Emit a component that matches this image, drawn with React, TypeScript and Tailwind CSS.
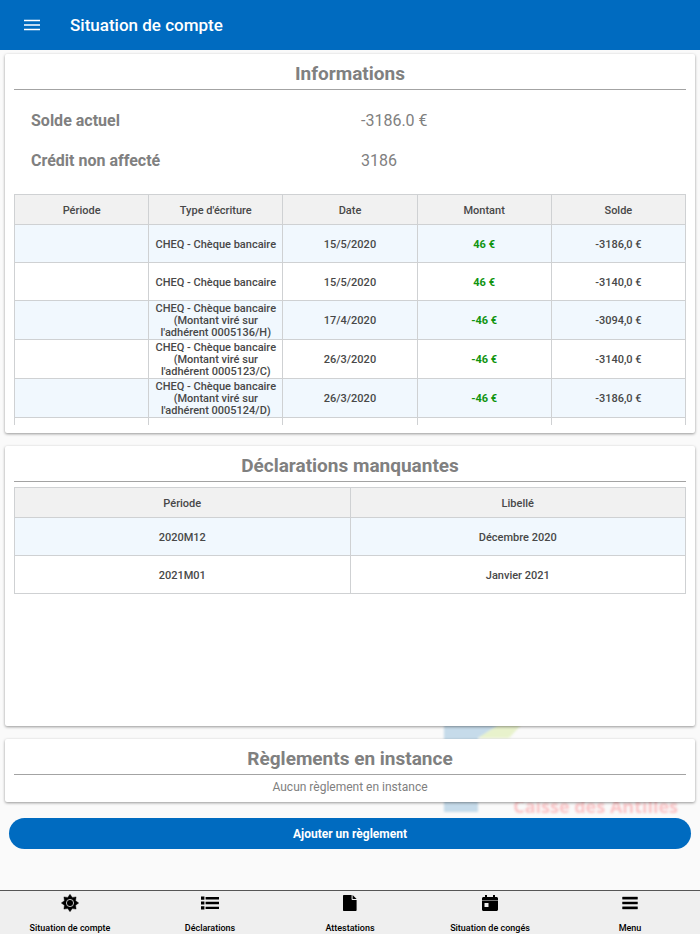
import { type ReactNode } from "react";

type Column = string;

const ecritureColumns: Column[] = ["Période", "Type d'écriture", "Date", "Montant", "Solde"];

const ecritures = [
  { type: ["CHEQ - Chèque bancaire"], date: "15/5/2020", montant: "46 €", solde: "-3186,0 €" },
  { type: ["CHEQ - Chèque bancaire"], date: "15/5/2020", montant: "46 €", solde: "-3140,0 €" },
  { type: ["CHEQ - Chèque bancaire", "(Montant viré sur", "l'adhérent 0005136/H)"], date: "17/4/2020", montant: "-46 €", solde: "-3094,0 €" },
  { type: ["CHEQ - Chèque bancaire", "(Montant viré sur", "l'adhérent 0005123/C)"], date: "26/3/2020", montant: "-46 €", solde: "-3140,0 €" },
  { type: ["CHEQ - Chèque bancaire", "(Montant viré sur", "l'adhérent 0005124/D)"], date: "26/3/2020", montant: "-46 €", solde: "-3186,0 €" },
];

const declarations = [
  { periode: "2020M12", libelle: "Décembre 2020" },
  { periode: "2021M01", libelle: "Janvier 2021" },
];

const cell = "border border-[#cfd1d3] px-0 pt-0.5 pb-0 text-center align-middle";

function Card({ title, className, children }: { title: string; className: string; children: ReactNode }) {
  return (
    <section className={`relative z-10 rounded-xs bg-white px-[9px] shadow-[0_1px_3px_rgba(0,0,0,0.4)] ${className}`}>
      <h2 className="border-b border-[#a3a3a3] pt-2 pb-[3px] text-center text-[19px] leading-6 font-bold text-[#808080]">{title}</h2>
      {children}
    </section>
  );
}

function HeadRow({ columns }: { columns: Column[] }) {
  return (
    <thead>
      <tr className="h-[30px] bg-[#f1f1f1]">
        {columns.map((c) => (
          <th key={c} scope="col" className={`${cell} font-medium`}>
            {c}
          </th>
        ))}
      </tr>
    </thead>
  );
}

function SunIcon() {
  return (
    <svg viewBox="0 0 18 18" className="size-[18px]" aria-hidden="true">
      <path
        d="M9 .3L11.3 3.4L15.1 2.9L14.6 6.7L17.7 9L14.6 11.3L15.1 15.1L11.3 14.6L9 17.7L6.7 14.6L2.9 15.1L3.4 11.3L.3 9L3.4 6.7L2.9 2.9L6.7 3.4Z"
        stroke="#000"
        strokeWidth=".4"
        strokeLinejoin="round"
      />
      <circle cx="9" cy="9" r="3.6" fill="none" stroke="#efefef" strokeWidth="0.8" />
    </svg>
  );
}

function ListIcon() {
  return (
    <svg viewBox="0 0 18 14" className="h-3.5 w-[18px]" aria-hidden="true">
      <path d="M0 .5h3.4v3.2H0zM0 5.4h3.4v3.2H0zM0 10.3h3.4v3.2H0zM4.6 1H18v2.4H4.6zM4.6 5.8H18v2.4H4.6zM4.6 10.7H18v2.4H4.6z" />
    </svg>
  );
}

function FileIcon() {
  return (
    <svg viewBox="0 0 14 16" className="h-4 w-3.5" aria-hidden="true">
      <path d="M1 0h7.6v4.2c0 .5.4.8.8.8h4.200v10c0 .6-.4 1-1 1H1c-.6 0-1-.4-1-1V1c0-.6.4-1 1-1zM9.6 0l4 4h-4z" />
    </svg>
  );
}

function CalendarIcon() {
  return (
    <svg viewBox="0 0 16 16" className="size-4" aria-hidden="true">
      <path
        fillRule="evenodd"
        d="M3 0h2v2h6V0h2v2h1.5c.8 0 1.5.7 1.5 1.5V5H0V3.5C0 2.7.7 2 1.5 2H3zM0 5.5h16v9c0 .8-.7 1.5-1.5 1.5h-13C.7 16 0 15.3 0 14.5zM2.5 8v4h4V8z"
      />
    </svg>
  );
}

function BarsIcon() {
  return (
    <svg viewBox="0 0 16 14" className="h-3.5 w-4" aria-hidden="true">
      <path d="M.5 1h15v2.2H.5zM.5 5.900h15v2.2H.5zM.5 10.800h15V13H.5z" stroke="#000" strokeWidth=".4" strokeLinejoin="round" />
    </svg>
  );
}

const tabs = [
  { label: "Situation de compte", icon: <SunIcon /> },
  { label: "Déclarations", icon: <ListIcon /> },
  { label: "Attestations", icon: <FileIcon /> },
  { label: "Situation de congés", icon: <CalendarIcon /> },
  { label: "Menu", icon: <BarsIcon /> },
];

function Watermark() {
  return (
    <div className="absolute top-[660px] right-[22px] h-[106px] w-[234px]" aria-hidden="true">
      <svg viewBox="0 0 234 106" className="absolute inset-0 size-full blur-[1px]">
        <path d="M0 0H78L34 28V102H0z" fill="#c6dbea" />
        <path d="M34 28L78 0h13L65 28z" fill="#e8f2cc" />
      </svg>
      <p className="absolute right-0 bottom-0 text-lg leading-5 font-bold whitespace-nowrap text-[#fac4c6] blur-[1px] [font-family:'Open_Sans',sans-serif]">
        Caisse des Antilles
      </p>
    </div>
  );
}

export default function App() {
  return (
    <div className="flex min-h-screen flex-col bg-[#fafafa] [font-family:Roboto,sans-serif]">
      <header className="flex h-[50px] items-center gap-[30px] bg-[#006bc0] px-6 text-white">
        <button type="button" aria-label="Ouvrir le menu" className="flex size-4 items-center">
          <svg viewBox="0 0 16 12" className="h-3 w-4" aria-hidden="true">
            <path d="M0 1.5h16M0 6h16M0 10.5h16" stroke="currentColor" strokeWidth="1.5" />
          </svg>
        </button>
        <h1 className="text-[17px] leading-6 font-medium">Situation de compte</h1>
      </header>

      <main className="relative flex flex-1 flex-col px-[5px] pt-1">
        <Watermark />

        <Card title="Informations" className="pb-2">
          <dl className="grid grid-cols-[330px_1fr] gap-y-4 px-[17px] pt-[19px] pb-[21px] text-base leading-6 text-[#808080]">
            <dt className="font-bold">Solde actuel</dt>
            <dd>-3186.0 €</dd>
            <dt className="font-bold">Crédit non affecté</dt>
            <dd>3186</dd>
          </dl>
          <div className="h-[231px] overflow-hidden">
            <table className="w-full table-fixed border-collapse text-[11px] leading-3 font-medium text-[#484848]">
              <HeadRow columns={ecritureColumns} />
              <tbody>
                {ecritures.map((e, i) => (
                  <tr key={i} className={`${e.type.length > 1 ? "h-[39px]" : "h-[38px]"} ${i % 2 === 0 ? "bg-[#f1f8fe]" : "bg-white"}`}>
                    <td className={cell} />
                    <td className={cell}>
                      {e.type.map((line) => (
                        <span key={line} className="block whitespace-nowrap">
                          {line}
                        </span>
                      ))}
                    </td>
                    <td className={cell}>{e.date}</td>
                    <td className={`${cell} font-bold text-[#109410]`}>{e.montant}</td>
                    <td className={cell}>{e.solde}</td>
                  </tr>
                ))}
                <tr className="h-[39px] bg-white">
                  {ecritureColumns.map((c) => (
                    <td key={c} className={cell} />
                  ))}
                </tr>
              </tbody>
            </table>
          </div>
        </Card>

        <Card title="Déclarations manquantes" className="mt-[13px] min-h-[280px]">
          <table className="mt-[5px] w-full table-fixed border-collapse text-[11px] leading-3 font-medium text-[#484848]">
            <HeadRow columns={["Période", "Libellé"]} />
            <tbody>
              {declarations.map((d, i) => (
                <tr key={d.periode} className={`h-[38px] ${i % 2 === 0 ? "bg-[#f1f8fe]" : "bg-white"}`}>
                  <td className={cell}>{d.periode}</td>
                  <td className={cell}>{d.libelle}</td>
                </tr>
              ))}
            </tbody>
          </table>
        </Card>

        <Card title="Règlements en instance" className="mt-[13px] pb-[7px]">
          <p className="pt-1 text-center text-xs leading-4 text-[#808080]">Aucun règlement en instance</p>
        </Card>

        <button type="button" className="relative z-10 mx-1 mt-4 h-[31px] rounded-full bg-[#006bc0] text-xs font-bold text-white">
          Ajouter un règlement
        </button>
      </main>

      <nav className="grid h-11 grid-cols-5 border-t border-[#555] bg-[#efefef]">
        {tabs.map((t) => (
          <button key={t.label} type="button" className="flex flex-col items-center justify-between pt-[3px] text-[9px] leading-3 font-medium text-black">
            <span className="flex h-[18px] items-center">{t.icon}</span>
            <span className="whitespace-nowrap">{t.label}</span>
          </button>
        ))}
      </nav>
    </div>
  );
}
